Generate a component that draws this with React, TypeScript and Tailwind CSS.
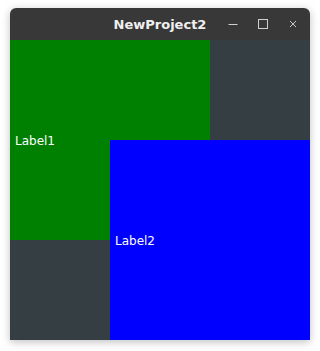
import React from "react";

export default function App() {
  return (
    <div className="w-[320px] h-[351px] bg-white pt-[8px] pl-[10px]">
      <div className="w-[300px] flex flex-col rounded-t-[6px] overflow-hidden shadow-[0_2px_8px_rgba(0,0,0,0.25)]">
        <div className="h-[32px] bg-[#383838] grid grid-cols-[1fr_auto_1fr] items-center">
          <div />
          <div
            className="text-[13px] font-bold text-[#f0f0f0] pt-[1px]"
            style={{ fontFamily: '"DejaVu Sans", sans-serif' }}
          >
            NewProject2
          </div>
          <div className="flex justify-end items-center pr-[2px] text-[#d8d8d8]">
            <div className="w-[30px] h-[24px] flex items-center justify-center">
              <svg width="12" height="12" viewBox="0 0 12 12">
                <line x1="1.5" y1="6.5" x2="10.5" y2="6.5" stroke="#d0d0d0" strokeWidth="1" />
              </svg>
            </div>
            <div className="w-[30px] h-[24px] flex items-center justify-center">
              <svg width="12" height="12" viewBox="0 0 12 12">
                <rect x="1.5" y="1.5" width="9" height="9" fill="none" stroke="#d0d0d0" strokeWidth="1" />
              </svg>
            </div>
            <div className="w-[30px] h-[24px] flex items-center justify-center">
              <svg width="12" height="12" viewBox="0 0 12 12">
                <path d="M3 3 L9 9 M9 3 L3 9" stroke="#c8c8c8" strokeWidth="1" />
              </svg>
            </div>
          </div>
        </div>
        <div
          className="h-[300px] bg-[#353f43] grid grid-cols-[100px_100px_100px] grid-rows-[100px_100px_100px] text-white text-[12px]"
          style={{ fontFamily: '"DejaVu Sans", sans-serif' }}
        >
          <div className="col-start-1 col-end-3 row-start-1 row-end-3 bg-[#008000] flex items-center pl-[5px] pt-[2px]">
            Label1
          </div>
          <div className="col-start-2 col-end-4 row-start-2 row-end-4 bg-[#0000ff] flex items-center pl-[5px] pt-[2px]">
            Label2
          </div>
        </div>
      </div>
    </div>
  );
}
